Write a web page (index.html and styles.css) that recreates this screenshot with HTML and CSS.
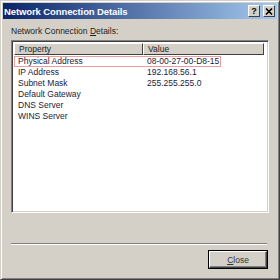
FILE: index.html
```html
<!DOCTYPE html>
<html lang="en">

<head>
    <meta charset="UTF-8">
    <title>Network Connection Details</title>
    <link rel="stylesheet" href="styles.css">
</head>

<body>
    <div class="window">
        <div class="titlebar">
            <span class="title">Network Connection Details</span>
            <span class="tbtn">?</span>
            <span class="tbtn close-x">
                <svg width="8" height="7" viewBox="0 0 8 7">
                    <path d="M1 0.5 L7 6.5 M7 0.5 L1 6.5" stroke="#000" stroke-width="1.6" fill="none" />
                </svg>
            </span>
        </div>

        <div class="content">
            <div class="label">Network Connection <u>D</u>etails:</div>

            <div class="listbox">
                <div class="header">
                    <div class="hcell prop">Property</div>
                    <div class="hcell val">Value</div>
                </div>
                <div class="row focus">
                    <div class="cell prop">Physical Address</div>
                    <div class="cell val">08-00-27-00-D8-15</div>
                </div>
                <div class="row">
                    <div class="cell prop">IP Address</div>
                    <div class="cell val">192.168.56.1</div>
                </div>
                <div class="row">
                    <div class="cell prop">Subnet Mask</div>
                    <div class="cell val">255.255.255.0</div>
                </div>
                <div class="row">
                    <div class="cell prop">Default Gateway</div>
                    <div class="cell val"></div>
                </div>
                <div class="row">
                    <div class="cell prop">DNS Server</div>
                    <div class="cell val"></div>
                </div>
                <div class="row">
                    <div class="cell prop">WINS Server</div>
                    <div class="cell val"></div>
                </div>
            </div>

            <div class="separator"></div>

            <div class="buttons">
                <div class="button"><span><u>C</u>lose</span></div>
            </div>
        </div>
    </div>
</body>

</html>
```

FILE: styles.css
```css
html,
body {
    margin: 0;
    padding: 0;
}

body {
    width: 280px;
    height: 280px;
    background-color: #d4d0c8;
    font-family: "Liberation Sans", Arial, sans-serif;
    font-size: 8.5px;
    color: #000;
}

.window {
    box-sizing: border-box;
    width: 280px;
    height: 280px;
    border-top: 1px solid #d4d0c8;
    border-left: 1px solid #d4d0c8;
    border-right: 1px solid #404040;
    border-bottom: 1px solid #404040;
    box-shadow: inset 1px 1px 0 #fff, inset -1px -1px 0 #808080;
    padding: 2px;
    display: flex;
    flex-direction: column;
}

.titlebar {
    height: 16px;
    background: linear-gradient(to right, #0a246a, #a6caf0);
    display: flex;
    align-items: center;
    padding: 0 2px 0 1px;
}

.title {
    flex: 1;
    color: #fff;
    font-weight: bold;
    font-size: 9.5px;
    letter-spacing: -0.1px;
}

.tbtn {
    box-sizing: border-box;
    width: 12px;
    height: 12px;
    background: #d4d0c8;
    border-top: 1px solid #fff;
    border-left: 1px solid #fff;
    border-right: 1px solid #404040;
    border-bottom: 1px solid #404040;
    display: flex;
    align-items: center;
    justify-content: center;
    font-weight: bold;
    font-size: 9px;
    line-height: 1;
}

.close-x {
    margin-left: 3px;
}

.content {
    flex: 1;
    display: flex;
    flex-direction: column;
    padding: 6px 8px 8px 8px;
}

.label {
    height: 13px;
    line-height: 13px;
    color: #222;
    margin-bottom: 2px;
}

.listbox {
    box-sizing: border-box;
    height: 173px;
    background: #fff;
    border-top: 1px solid #808080;
    border-left: 1px solid #808080;
    border-right: 1px solid #fff;
    border-bottom: 1px solid #fff;
    box-shadow: inset 1px 1px 0 #404040, inset -1px -1px 0 #d4d0c8;
    padding: 2px 4px 2px 2px;
}

.header {
    display: flex;
    height: 12px;
}

.hcell {
    box-sizing: border-box;
    height: 12px;
    line-height: 10px;
    background: #d4d0c8;
    border-top: 1px solid #fff;
    border-left: 1px solid #fff;
    border-right: 1px solid #404040;
    border-bottom: 1px solid #404040;
    padding-left: 4px;
    color: #222;
}

.hcell.prop {
    width: 129px;
}

.hcell.val {
    flex: 1;
}

.row {
    box-sizing: border-box;
    display: flex;
    width: fit-content;
    height: 11px;
    line-height: 9px;
    padding-top: 1px;
    border: 1px solid transparent;
    border-top-width: 0;
    color: #1b1b3a;
}

.row.focus {
    border-color: #ec9c9c;
    border-top-width: 1px;
    padding-top: 0;
    margin-top: 1px;
}

.cell.prop {
    width: 129px;
    padding-left: 3px;
    box-sizing: border-box;
}

.cell.val {
    padding-left: 3px;
    padding-right: 1px;
}

.separator {
    margin-top: 30px;
    height: 0;
    border-top: 1px solid #808080;
    border-bottom: 1px solid #fff;
    margin-right: 2px;
}

.buttons {
    display: flex;
    justify-content: flex-end;
    margin-top: 5px;
    padding-right: 1px;
}

.button {
    box-sizing: border-box;
    width: 60px;
    height: 19px;
    border: 1px solid #000;
    display: flex;
}

.button span {
    flex: 1;
    background: #d4d0c8;
    border-top: 1px solid #fff;
    border-left: 1px solid #fff;
    border-right: 1px solid #404040;
    border-bottom: 1px solid #404040;
    box-shadow: inset -1px -1px 0 #808080;
    display: flex;
    align-items: center;
    justify-content: center;
    color: #333;
}
```
